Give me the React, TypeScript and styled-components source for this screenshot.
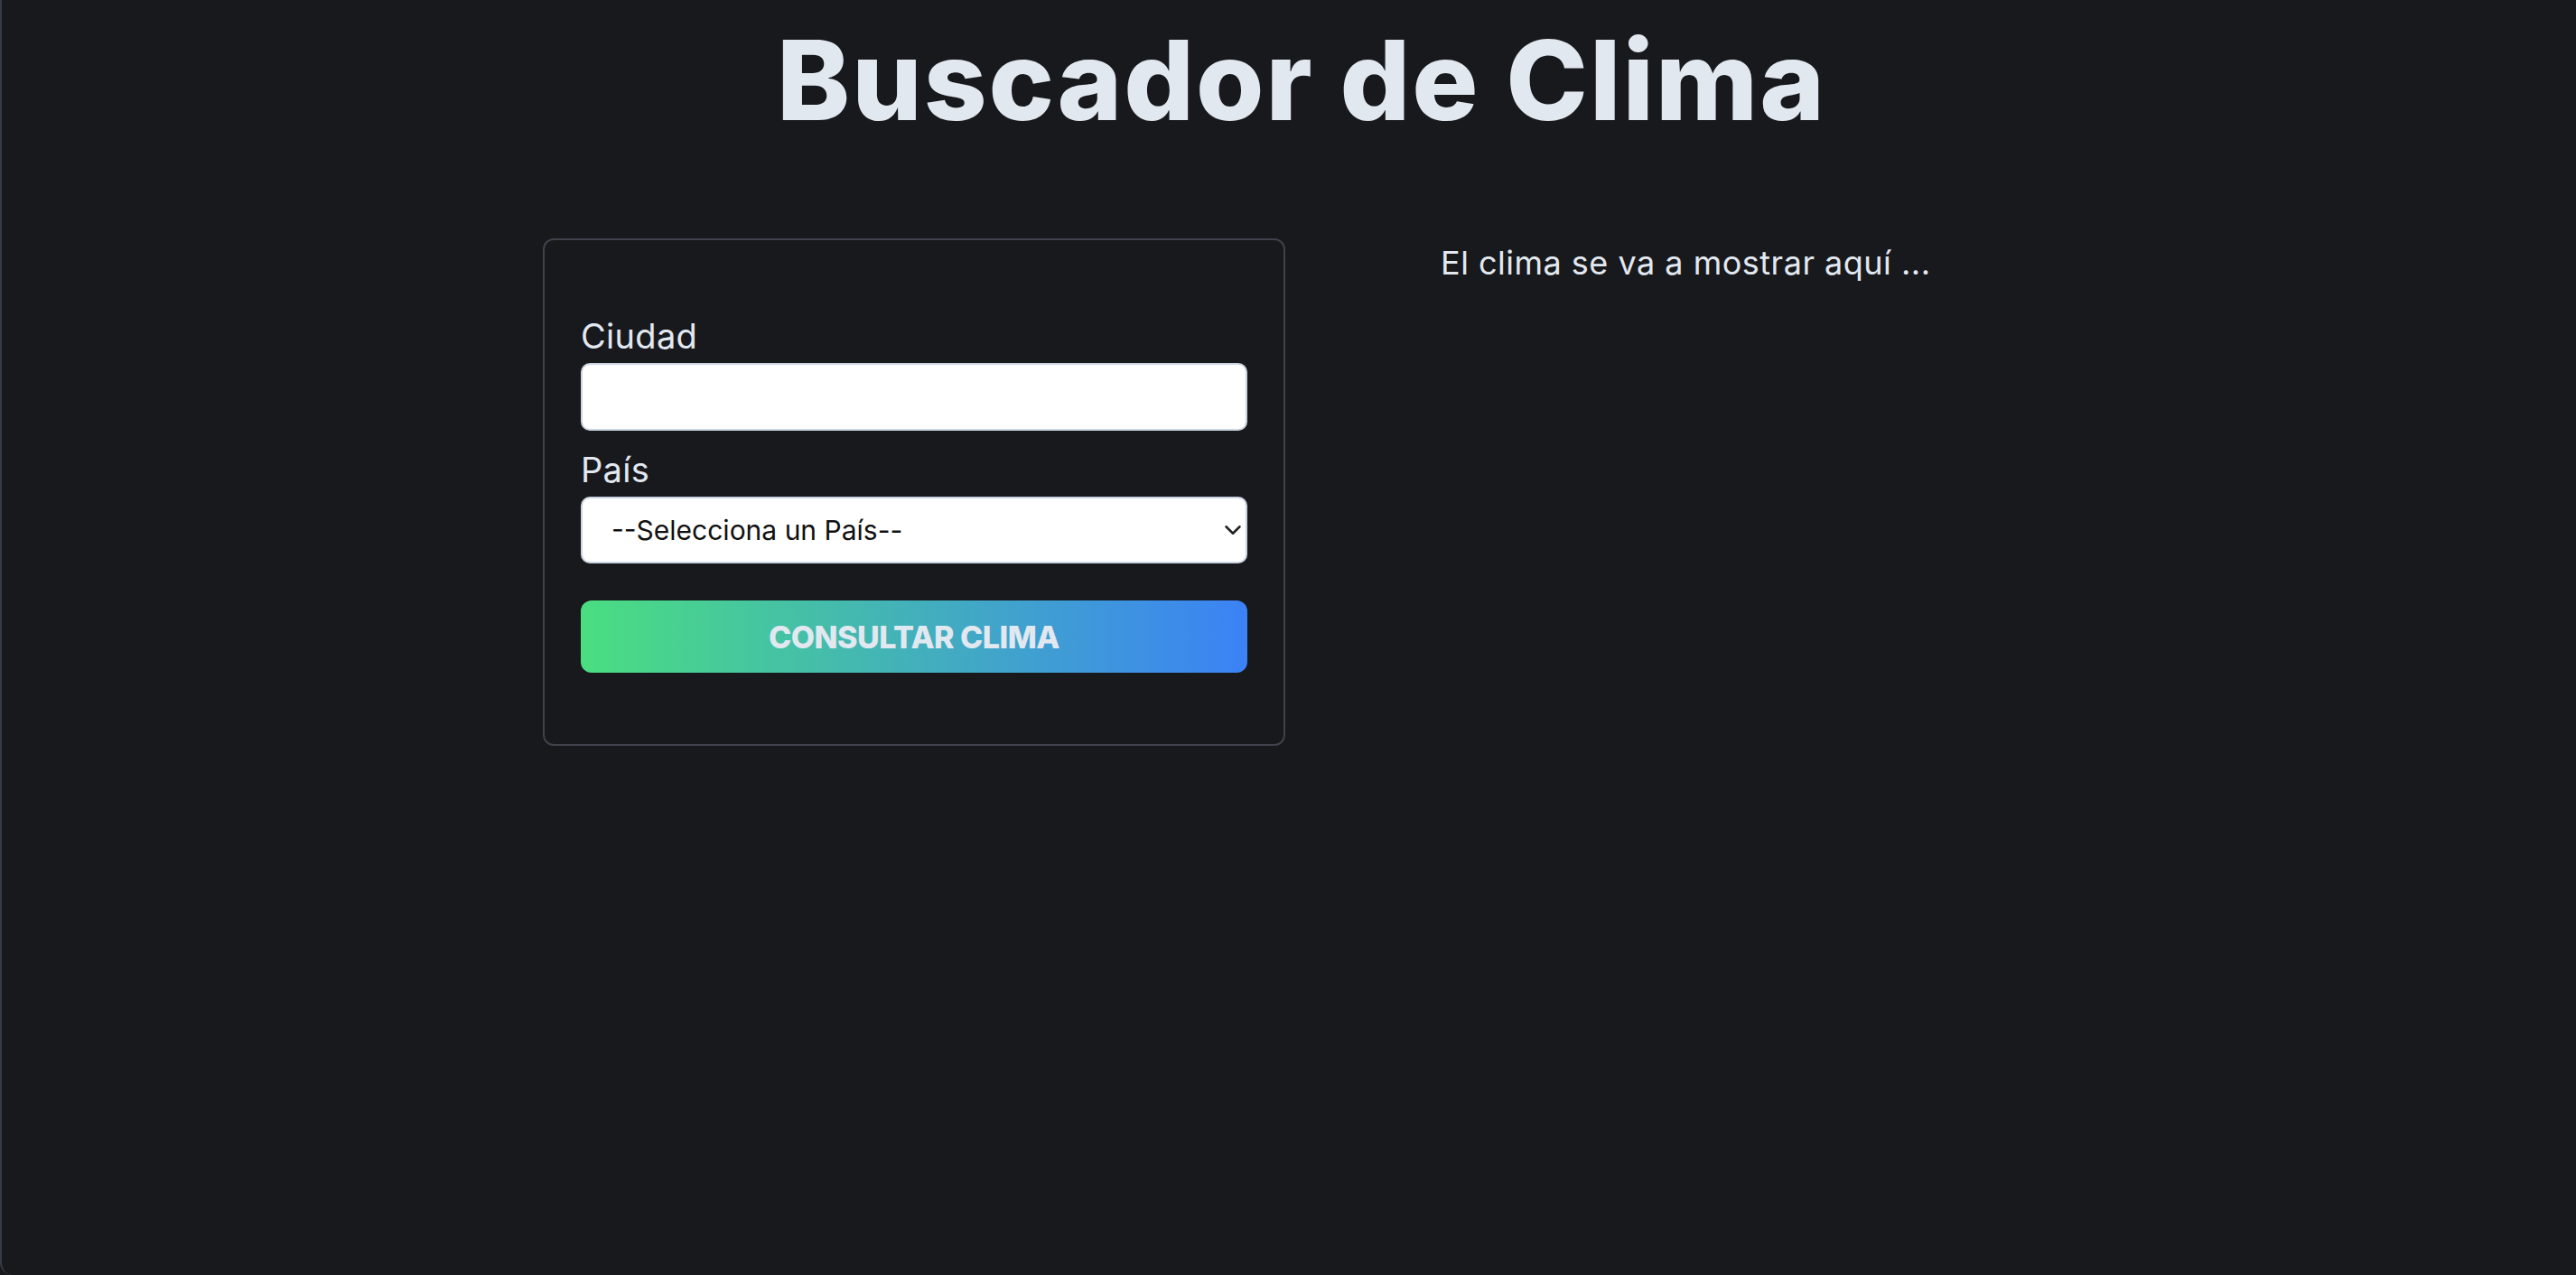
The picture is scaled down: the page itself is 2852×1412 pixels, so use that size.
import React from "react";
import styled, { createGlobalStyle } from "styled-components";
import { ChevronDown } from "lucide-react";

const GlobalStyle = createGlobalStyle`
  * { box-sizing: border-box; }
  html, body { margin: 0; padding: 0; }
  body {
    background: #18191c;
    min-height: 100vh;
    font-family: Inter, "Open Sans", "Liberation Sans", sans-serif;
    color: #e2e8f0;
    border-left: 2px solid #353b47;
    border-bottom-left-radius: 14px;
  }
`;

const Page = styled.div`
  min-height: 100vh;
  display: flex;
  flex-direction: column;
  align-items: center;
`;

const Title = styled.h1`
  margin: 28px 0 0;
  padding-left: 28px;
  font-size: 122px;
  line-height: 1;
  font-weight: 800;
  letter-spacing: 2px;
  color: #e2e8f0;
  text-align: center;
`;

const Main = styled.main`
  width: 1652px;
  margin-top: 114px;
  display: grid;
  grid-template-columns: 822px 1fr;
  column-gap: 172px;
  align-items: start;
`;

const Card = styled.form`
  border: 2px solid #3f424a;
  border-radius: 12px;
  padding: 82px 40px 79px;
  display: flex;
  flex-direction: column;
`;

const Field = styled.div<{ $first?: boolean }>`
  display: flex;
  flex-direction: column;
  gap: 6px;
  margin-top: ${(p) => (p.$first ? "0" : "19px")};
`;

const Label = styled.label`
  font-size: 38px;
  line-height: 48px;
  letter-spacing: 0.3px;
  color: #e2e8f0;
`;

const TextInput = styled.input`
  height: 75px;
  width: 100%;
  background: #ffffff;
  border: 2px solid #cbd5e1;
  border-radius: 10px;
  font-size: 32px;
  padding: 0 30px;
  outline: none;
`;

const SelectWrap = styled.div`
  position: relative;
`;

const Select = styled.select`
  appearance: none;
  -webkit-appearance: none;
  height: 74px;
  width: 100%;
  background: #ffffff;
  border: 2px solid #cbd5e1;
  border-radius: 10px;
  font-family: Inter, "Open Sans", "Liberation Sans", sans-serif;
  font-size: 30px;
  color: #111111;
  padding: 0 60px 0 32px;
  outline: none;
`;

const Chevron = styled.span`
  position: absolute;
  right: 0;
  top: 0;
  height: 100%;
  width: 32px;
  display: flex;
  align-items: center;
  justify-content: center;
  pointer-events: none;
  color: #222;
`;

const Button = styled.button`
  margin-top: 41px;
  height: 80px;
  width: 100%;
  border: none;
  border-radius: 12px;
  background: linear-gradient(to right, #4ade80, #3b82f6);
  color: #e2e8f0;
  font-family: Inter, "Open Sans", "Liberation Sans", sans-serif;
  font-size: 34px;
  font-weight: 800;
  letter-spacing: -0.5px;
  text-transform: uppercase;
  cursor: pointer;
`;

const Result = styled.p`
  margin: 3px 0 0;
  font-size: 36px;
  line-height: 48px;
  letter-spacing: 0.5px;
  color: #e2e8f0;
`;

export default function App() {
  return (
    <>
      <GlobalStyle />
      <Page>
        <Title>Buscador de Clima</Title>
        <Main>
          <Card onSubmit={(e) => e.preventDefault()}>
            <Field $first>
              <Label htmlFor="city">Ciudad</Label>
              <TextInput id="city" type="text" />
            </Field>
            <Field>
              <Label htmlFor="country">País</Label>
              <SelectWrap>
                <Select id="country" defaultValue="">
                  <option value="">--Selecciona un País--</option>
                  <option value="US">Estados Unidos</option>
                  <option value="MX">México</option>
                  <option value="AR">Argentina</option>
                  <option value="CO">Colombia</option>
                  <option value="CR">Costa Rica</option>
                  <option value="ES">España</option>
                  <option value="PE">Perú</option>
                </Select>
                <Chevron>
                  <ChevronDown size={30} strokeWidth={2} />
                </Chevron>
              </SelectWrap>
            </Field>
            <Button type="submit">Consultar Clima</Button>
          </Card>
          <Result>El clima se va a mostrar aquí ...</Result>
        </Main>
      </Page>
    </>
  );
}
